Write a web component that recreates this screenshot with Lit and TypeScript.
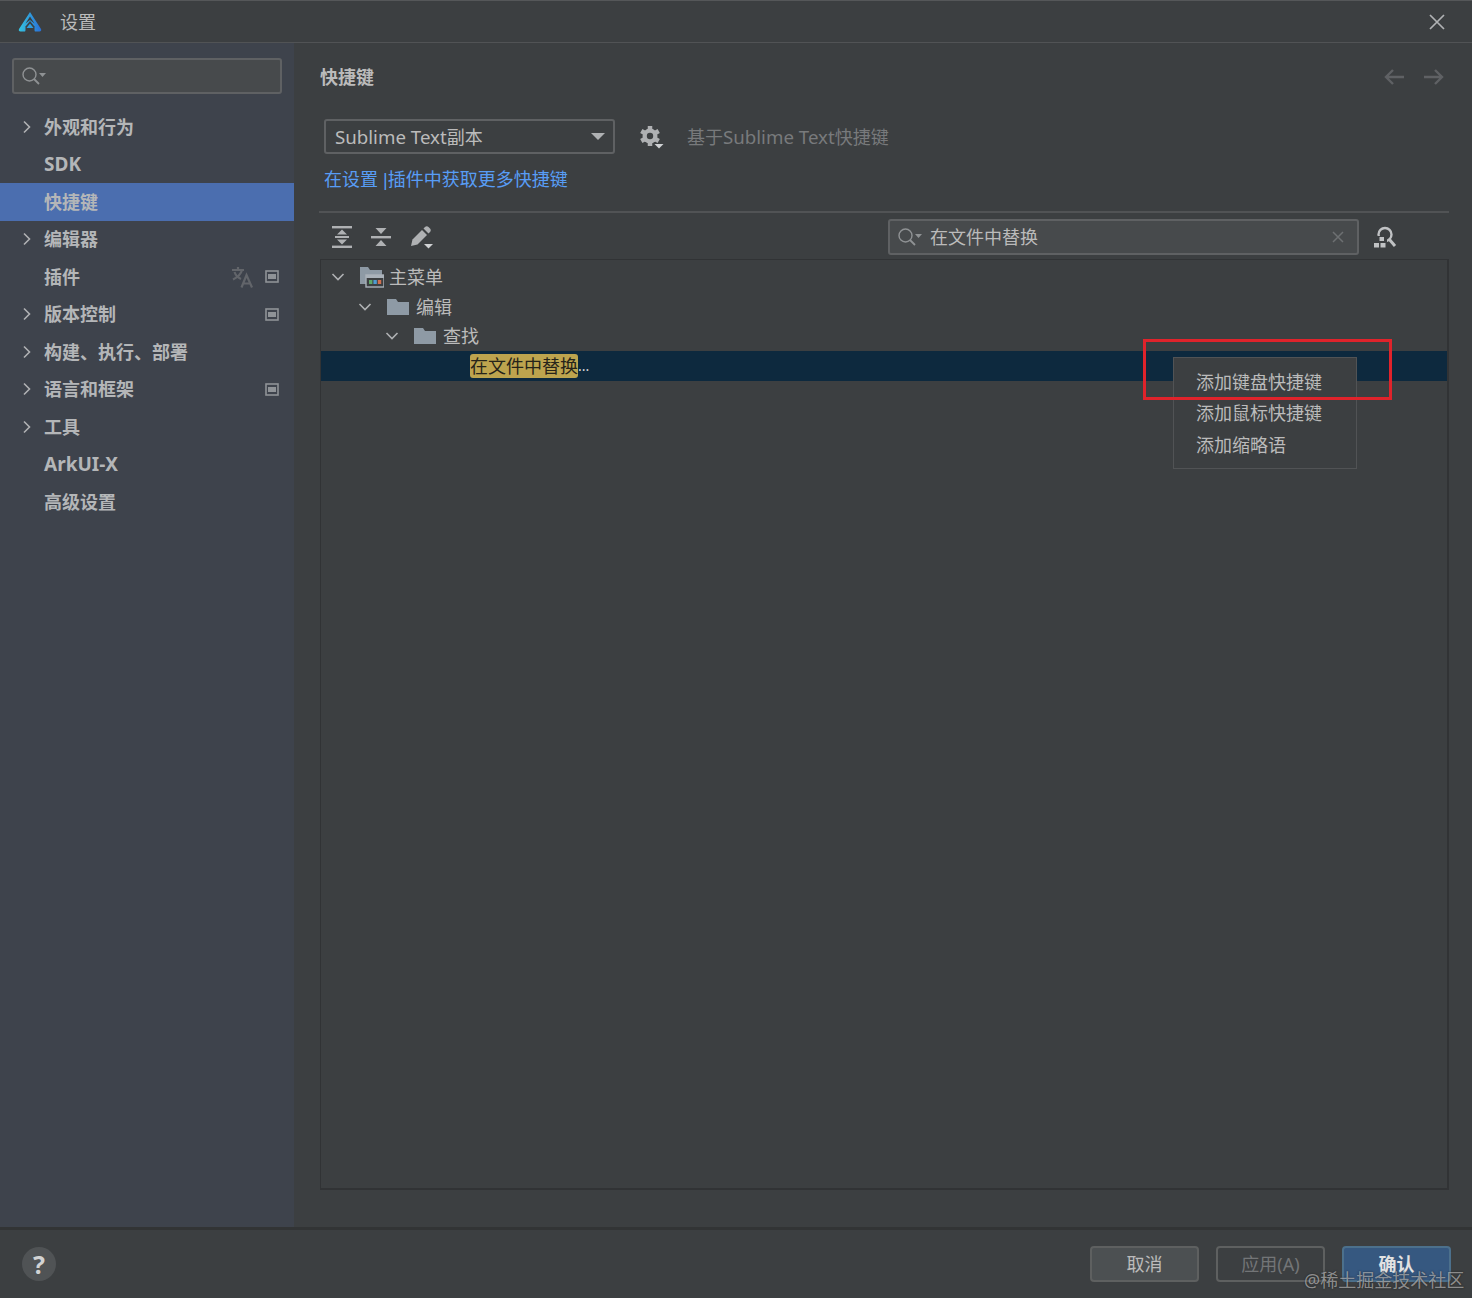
import { html, css, LitElement, TemplateResult } from 'lit';
import { customElement } from 'lit/decorators.js';

interface NavItem {
  label: string;
  arrow?: boolean;
  selected?: boolean;
  translate?: boolean;
  badge?: boolean;
  latin?: boolean;
}

const NAV: NavItem[] = [
  { label: '外观和行为', arrow: true },
  { label: 'SDK', latin: true },
  { label: '快捷键', selected: true },
  { label: '编辑器', arrow: true },
  { label: '插件', translate: true, badge: true },
  { label: '版本控制', arrow: true, badge: true },
  { label: '构建、执行、部署', arrow: true },
  { label: '语言和框架', arrow: true, badge: true },
  { label: '工具', arrow: true },
  { label: 'ArkUI-X', latin: true },
  { label: '高级设置' },
];

const chevronRight = html`<svg width="12" height="14" viewBox="0 0 12 14"><path d="M3 1.5 8.5 7 3 12.500" fill="none" stroke="#afb1b3" stroke-width="1.6"/></svg>`;
const chevronDown = html`<svg width="14" height="10" viewBox="0 0 14 10"><path d="M1.500 2 7 7.500 12.500 2" fill="none" stroke="#afb1b3" stroke-width="1.6"/></svg>`;
const folder = html`<svg width="22" height="18" viewBox="0 0 22 18"><path d="M0 1h9l2 3h11v13H0z" fill="#8e9aa5"/></svg>`;
const mainMenuFolder = html`<svg width="24" height="22" viewBox="0 0 24 22">
  <path d="M0 1h8l2 3h12v5H7v9H0z" fill="#8e9aa5"/>
  <rect x="6" y="9" width="18" height="12" fill="#3c3f41" stroke="#aab2ba" stroke-width="1.4"/>
  <rect x="6" y="9" width="18" height="3" fill="#aab2ba"/>
  <rect x="9" y="14" width="3.4" height="4" fill="#5fa86a"/>
  <rect x="13.4" y="14" width="3.4" height="4" fill="#4f9bd0"/>
  <rect x="17.8" y="14" width="3.4" height="4" fill="#d0704f"/>
</svg>`;

function searchIcon(): TemplateResult {
  return html`<svg width="26" height="20" viewBox="0 0 26 20">
    <circle cx="8.500" cy="8.500" r="6.500" fill="none" stroke="#8f9294" stroke-width="1.4"/>
    <path d="M13 13l5 5" stroke="#8f9294" stroke-width="1.8"/>
    <path d="M18 7h7l-3.500 4z" fill="#8f9294"/>
  </svg>`;
}

@customElement('app-root')
export class AppRoot extends LitElement {
  static styles = css`
    :host {
      display: flex;
      flex-direction: column;
      position: relative;
      width: 1472px;
      height: 1298px;
      overflow: hidden;
      background: #3c3f41;
      color: #bbbbbb;
      font-family: 'Noto Sans', 'Noto Sans CJK SC', sans-serif;
      font-size: 18px;
      line-height: 24px;
    }

    .titlebar {
      display: flex;
      flex: none;
      align-items: center;
      box-sizing: border-box;
      height: 43px;
      padding: 0 27px 0 18px;
      border-top: 1px solid #555759;
      border-bottom: 1px solid #515355;
    }
    .titlebar .name {
      flex: 1;
      margin-left: 18px;
    }

    .body {
      display: flex;
      flex: none;
      height: 1184px;
    }

    .sidebar {
      flex: none;
      box-sizing: border-box;
      width: 294px;
      padding: 15px 12px 0;
      background: #3e434c;
    }
    .side-search {
      display: flex;
      align-items: center;
      box-sizing: border-box;
      height: 36px;
      margin-bottom: 14px;
      padding-left: 7px;
      border: 2px solid #5f6163;
      border-radius: 3px;
      background: #474a4c;
    }
    .nav {
      margin: 0 -12px;
    }
    .nav-row {
      display: flex;
      align-items: center;
      height: 37.5px;
      padding-right: 15px;
      font-weight: 700;
      color: #b4b6b8;
    }
    .nav-row.selected {
      background: #4b6eaf;
    }
    .nav-arrow {
      display: flex;
      flex: none;
      box-sizing: border-box;
      width: 44px;
      padding-left: 21px;
    }
    .nav-label {
      flex: 1;
    }
    .nav-label.latin {
      font-size: 19px;
    }
    .nav-translate {
      margin-right: 12px;
    }

    .main {
      flex: 1;
      box-sizing: border-box;
      padding: 22px 23px 0 26px;
    }
    .heading-row {
      display: flex;
      align-items: center;
      justify-content: space-between;
      height: 24px;
      margin-bottom: 30px;
      padding-right: 5px;
      font-weight: 700;
    }
    .heading-row h1 {
      margin: 0;
      font: inherit;
    }
    .nav-arrows {
      display: flex;
      gap: 20px;
    }
    .scheme-row {
      display: flex;
      align-items: center;
      margin-left: 4px;
    }
    .combo {
      display: flex;
      align-items: center;
      box-sizing: border-box;
      width: 291px;
      height: 35px;
      padding: 0 8px 0 9px;
      border: 2px solid #5f6163;
      border-radius: 3px;
    }
    .mixed {
      font-size: 18.7px;
    }
    .caret {
      width: 0;
      height: 0;
      margin-left: auto;
      border-left: 7px solid transparent;
      border-right: 7px solid transparent;
      border-top: 7px solid #afb1b3;
    }
    .gear {
      display: flex;
      margin-left: 25px;
    }
    .based {
      margin-left: 23px;
      color: #787a7c;
    }
    .link {
      margin: 13px 0 0 4px;
      color: #589df6;
    }
    .link .bar {
      font-family: 'Liberation Sans', sans-serif;
    }
    .divider {
      height: 2px;
      margin: 19px 0 0 -1px;
      background: #515355;
    }
    .toolbar {
      display: flex;
      align-items: center;
      height: 47px;
      padding-left: 12px;
    }
    .tool-icons {
      display: flex;
      align-items: center;
      gap: 19px;
      width: 556px;
    }
    .filter {
      display: flex;
      align-items: center;
      box-sizing: border-box;
      width: 471px;
      height: 36px;
      padding: 0 13px 0 7px;
      border: 2px solid #5f6163;
      border-radius: 3px;
      background: #474a4c;
    }
    .filter span {
      flex: 1;
      margin-left: 7px;
    }
    .find {
      display: flex;
      margin-left: 14px;
    }
    .tree {
      box-sizing: border-box;
      height: 931px;
      margin-top: -1px;
      padding-top: 2px;
      border: solid #313335;
      border-width: 1px 2px 2px 1px;
    }
    .tree-row {
      display: flex;
      align-items: center;
      height: 29.75px;
    }
    .tree-chevron {
      display: flex;
      flex: none;
      margin-left: 10px;
      margin-right: 15px;
    }
    .tree-row .folder {
      display: flex;
      margin-right: 7px;
    }
    .tree-row.menu-root .folder {
      margin-right: 5px;
    }
    .tree-row.selected {
      padding-left: 149px;
      background: #0d293e;
      color: #d4d6d8;
    }
    .match {
      height: 24px;
      border-radius: 3px;
      background: #bda44e;
      color: #26241a;
    }
    .dots {
      font-size: 14px;
    }

    .footer {
      display: flex;
      flex: 1;
      align-items: center;
      box-sizing: border-box;
      padding: 0 21px 0 22px;
      border-top: 3px solid #323435;
    }
    .help {
      display: flex;
      align-items: center;
      justify-content: center;
      width: 34px;
      height: 34px;
      margin-right: auto;
      border-radius: 50%;
      background: #505355;
      color: #d2d3d4;
      font-size: 25px;
      font-weight: 700;
    }
    .btn {
      display: flex;
      align-items: center;
      justify-content: center;
      box-sizing: border-box;
      width: 109px;
      height: 36px;
      margin-left: 17px;
      border: 2px solid #5e6060;
      border-radius: 4px;
      background: #4c5052;
    }
    .btn.disabled {
      background: transparent;
      color: #737577;
    }
    .btn.primary {
      border-color: #4c708c;
      background: #365880;
      color: #e2e2e2;
      font-weight: 700;
    }

    .menu {
      position: absolute;
      left: 1173px;
      top: 357px;
      box-sizing: border-box;
      width: 184px;
      height: 112px;
      padding: 9px 22px;
      border: 1px solid #515355;
      background: #3c3f41;
    }
    .menu div {
      height: 31.4px;
      line-height: 31.4px;
    }
    .red-box {
      position: absolute;
      left: 1143px;
      top: 339px;
      box-sizing: border-box;
      width: 249px;
      height: 61px;
      border: 3px solid #e0232b;
    }
    .watermark {
      position: absolute;
      left: 1304px;
      top: 1268px;
      color: rgba(205, 205, 205, 0.62);
      text-shadow: 0 0 2px rgba(20, 20, 20, 0.7);
      white-space: nowrap;
    }
  `;

  renderNavRow(item: NavItem): TemplateResult {
    return html`<div class="nav-row ${item.selected ? 'selected' : ''}">
      <span class="nav-arrow">${item.arrow ? chevronRight : ''}</span>
      <span class="nav-label ${item.latin ? 'latin' : ''}">${item.label}</span>
      ${item.translate
        ? html`<svg class="nav-translate" width="22" height="22" viewBox="0 0 22 22" fill="none" stroke="#62656a" stroke-width="2.2">
            <path d="M1 4h12M7 1v3M11 4c-1 4-4 7-9 9.500M3.500 6c1 3 3.500 5.500 6.500 7M10.500 21.500 15.500 9l5.500 12.500M12 17.500h7.500"/>
          </svg>`
        : ''}
      ${item.badge
        ? html`<svg width="14" height="13" viewBox="0 0 14 13">
            <rect x="1" y="1" width="12" height="11" fill="none" stroke="#8f9397" stroke-width="1.6"/>
            <rect x="3" y="4" width="8" height="5" fill="#8f9397"/>
          </svg>`
        : ''}
    </div>`;
  }

  renderFolderRow(label: string, depth: number): TemplateResult {
    return html`<div class="tree-row ${depth === 0 ? 'menu-root' : ''}" style="padding-left:${depth * 27}px">
      <span class="tree-chevron">${chevronDown}</span>
      <span class="folder">${depth === 0 ? mainMenuFolder : folder}</span>
      <span>${label}</span>
    </div>`;
  }

  render(): TemplateResult {
    return html`
      <div class="titlebar">
        <svg width="24" height="22" viewBox="0 0 24 22">
          <defs>
            <linearGradient id="lg" x1="0" y1="0" x2="1" y2="0">
              <stop offset="0" stop-color="#35c4e0"/>
              <stop offset="1" stop-color="#2a6fd6"/>
            </linearGradient>
          </defs>
          <path d="M12 1 23 18c.6 1.300 0 2.500-1.500 2.500h-4.500l-5-6-5 6H2.500C1 20.500.4 19.300 1 18z" fill="url(#lg)"/>
          <path d="M12 5.500 7.500 12.500 12 9l4.500 3.500z" fill="#3c3f41"/>
          <path d="M12 10 7.500 15.500v5h9v-5z" fill="#3c3f41"/>
          <path d="M12 12.500 8.500 17h7z" fill="#2f9fe0"/>
        </svg>
        <span class="name">设置</span>
        <svg width="16" height="16" viewBox="0 0 16 16"><path d="M1 1l14 14M15 1 1 15" stroke="#b0b2b4" stroke-width="1.700"/></svg>
      </div>
      <div class="body">
        <div class="sidebar">
          <div class="side-search">${searchIcon()}</div>
          <div class="nav">${NAV.map(item => this.renderNavRow(item))}</div>
        </div>
        <div class="main">
          <div class="heading-row">
            <h1>快捷键</h1>
            <div class="nav-arrows">
              <svg width="20" height="16" viewBox="0 0 20 16"><path d="M20 8H2M9 1 2 8l7 7" fill="none" stroke="#5f6164" stroke-width="2.400"/></svg>
              <svg width="20" height="16" viewBox="0 0 20 16"><path d="M0 8h18M11 1l7 7-7 7" fill="none" stroke="#5f6164" stroke-width="2.400"/></svg>
            </div>
          </div>
          <div class="scheme-row">
            <div class="combo"><span class="mixed">Sublime Text</span><span>副本</span><span class="caret"></span></div>
            <span class="gear">
              <svg width="24" height="24" viewBox="0 0 24 24">
                <path d="M10 1v20M1.300 6l17.400 10M1.300 16l17.400-10" stroke="#afb1b3" stroke-width="4.500"/>
                <circle cx="10" cy="11" r="7.500" fill="#afb1b3"/>
                <circle cx="10" cy="11" r="3.200" fill="#3c3f41"/>
                <path d="M14.500 19h9L19 23.500z" fill="#d0d2d4"/>
              </svg>
            </span>
            <span class="based">基于<span class="mixed">Sublime Text</span>快捷键</span>
          </div>
          <div class="link">在设置<span class="bar"> |</span>插件中获取更多快捷键</div>
          <div class="divider"></div>
          <div class="toolbar">
            <div class="tool-icons">
              <svg width="20" height="22" viewBox="0 0 20 22" fill="#afb1b3">
                <rect width="20" height="2.400"/>
                <rect y="19.600" width="20" height="2.400"/>
                <rect x="3" y="10" width="14" height="2"/>
                <path d="M10 3.500 15 8.500H5zM10 18.500 5 13.500h10z"/>
              </svg>
              <svg width="20" height="20" viewBox="0 0 20 20" fill="#afb1b3">
                <rect y="9" width="20" height="2.400"/>
                <path d="M4.500 1h11L10 7zM10 13l5.500 6h-11z"/>
              </svg>
              <svg width="24" height="24" viewBox="0 0 24 24" fill="#afb1b3">
                <path d="M1 21l1.500-6.500L12 5l5 5-9.500 9.500z"/>
                <path d="M13.500 3.500 15 2c1-1 2.500-1 3.500 0l1.500 1.500c1 1 1 2.500 0 3.500l-1.500 1.500z"/>
                <path d="M14 19h9l-4.500 4.500z" fill="#d0d2d4"/>
              </svg>
            </div>
            <div class="filter">
              ${searchIcon()}
              <span>在文件中替换</span>
              <svg width="12" height="12" viewBox="0 0 12 12"><path d="M1 1l10 10M11 1 1 11" stroke="#6d7072" stroke-width="1.500"/></svg>
            </div>
            <span class="find">
              <svg width="24" height="22" viewBox="0 0 24 22">
                <circle cx="12" cy="8.500" r="6.500" fill="none" stroke="#c0c2c4" stroke-width="2.400"/>
                <path d="M16 13l6 7" stroke="#c0c2c4" stroke-width="3"/>
                <rect y="10" width="14" height="12" fill="#3c3f41"/>
                <rect x="6.500" y="11" width="4.500" height="4" fill="#c0c2c4"/>
                <rect x="1" y="17" width="5" height="4.500" fill="#c0c2c4"/>
                <rect x="7.500" y="17" width="5" height="4.500" fill="#c0c2c4"/>
              </svg>
            </span>
          </div>
          <div class="tree">
            ${this.renderFolderRow('主菜单', 0)}
            ${this.renderFolderRow('编辑', 1)}
            ${this.renderFolderRow('查找', 2)}
            <div class="tree-row selected">
              <span class="match">在文件中替换</span><span class="dots">...</span>
            </div>
          </div>
        </div>
      </div>
      <div class="footer">
        <span class="help">?</span>
        <span class="btn">取消</span>
        <span class="btn disabled">应用(A)</span>
        <span class="btn primary">确认</span>
      </div>
      <div class="menu">
        <div>添加键盘快捷键</div>
        <div>添加鼠标快捷键</div>
        <div>添加缩略语</div>
      </div>
      <div class="red-box"></div>
      <div class="watermark">@稀土掘金技术社区</div>
    `;
  }
}
